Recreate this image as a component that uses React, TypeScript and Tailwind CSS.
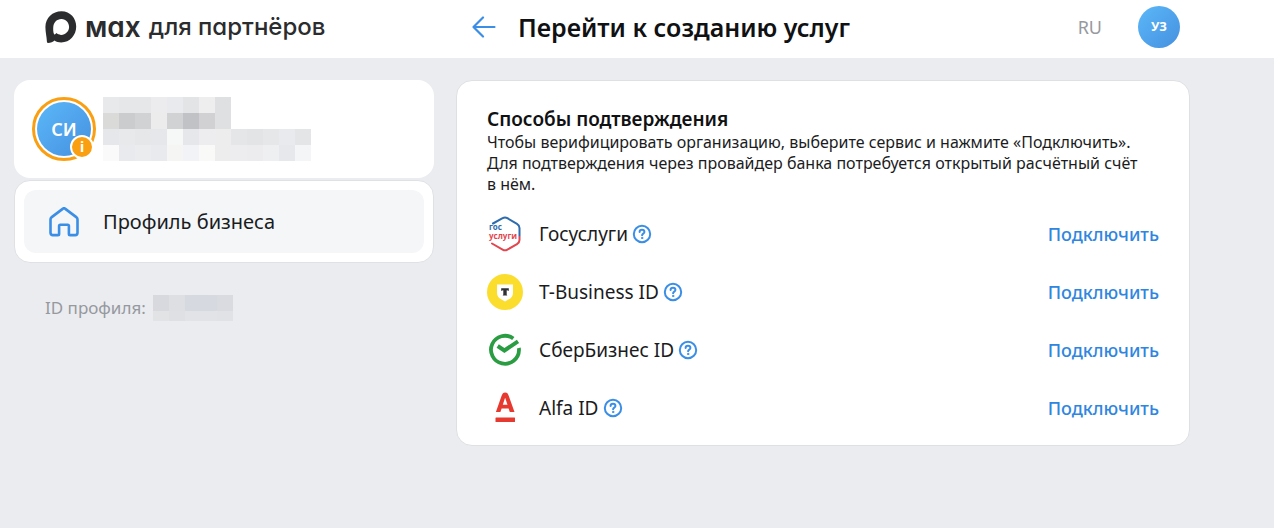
import type { ReactNode } from 'react';

const NAME_BLOCKS = [
    ['bg-[#e8e9eb]', 'bg-[#e6e7e9]', 'bg-[#e6e7e9]', 'bg-[#ececee]', 'bg-[#e8eaed]', 'bg-[#e2e4e6]', 'bg-[#eeeeef]', 'bg-[#dfe0e2]', '', '', '', '', ''],
    ['bg-[#dadad8]', 'bg-[#cbccce]', 'bg-[#d1d2d3]', 'bg-[#ececed]', 'bg-[#d1d2d3]', 'bg-[#c1c2c5]', 'bg-[#d1d1d3]', 'bg-[#dfe0e2]', '', '', '', '', ''],
    ['bg-[#e5e7ea]', 'bg-[#e8e9eb]', 'bg-[#e6e7e8]', 'bg-[#e6e7ea]', 'bg-[#f6f7f7]', 'bg-[#e5e7ea]', 'bg-[#ededef]', 'bg-[#ededee]', 'bg-[#e5e6e8]', 'bg-[#e3e4e6]', 'bg-[#e6e7e9]', 'bg-[#e8eaed]', 'bg-[#e4e5e7]'],
    ['bg-[#f9faf9]', 'bg-[#e9eaed]', 'bg-[#ebecee]', 'bg-[#e9eaed]', 'bg-[#f5f5f4]', 'bg-[#f2f3f6]', 'bg-[#f9f9f8]', 'bg-[#ededee]', 'bg-[#ededef]', 'bg-[#ececee]', 'bg-[#eeeff1]', 'bg-[#e7e8eb]', 'bg-[#f4f5f6]'],
];

const ID_BLOCKS = ['bg-[#d7d9df]', 'bg-[#dddfe3]', 'bg-[#d6d9e0]', 'bg-[#d6d9e0]', 'bg-[#d9dbe1]'];
const ID_BLOCKS_LOW = ['bg-[#e1e3e5]', 'bg-[#dee0e3]', 'bg-[#e2e3e6]', 'bg-[#e2e3e6]', 'bg-[#e1e2e5]'];

const MaxLogo = () => (
    <svg viewBox="0 0 32 32" className="h-8 w-8 shrink-0" aria-hidden="true">
        <path
            fill="#2b2c2e"
            fillRule="evenodd"
            d="M16.5.3C25.3.3 31.200 7.300 31.200 15.600c0 8.700-6.400 15.900-15 15.900-2.900 0-4.600-.5-6.700-1.900C8 31 5.700 31.900 3 31.900c-.8 0-1-.6-1.100-1.400C1.700 25.900.4 21.300.4 16 .4 7 7.600.3 16.500.3Zm.1 7.600C12 7.700 8.700 11.400 8.300 15.700c-.3 3 .1 7.300 1.300 7.700.6.2 1.300-.7 1.800-1.300 1.100.9 2.700 1.700 4.500 1.800 4.400.2 8-3.300 8.200-7.600.2-4.400-3.200-8.200-7.500-8.400Z"
        />
    </svg>
);

const ArrowLeft = () => (
    <svg viewBox="0 0 24 22" className="h-[22px] w-6" fill="none" stroke="#3b8ee5" strokeWidth="2.200" strokeLinecap="round" strokeLinejoin="round" aria-hidden="true">
        <path d="M22.500 11H1.500M11 1.500 1.500 11l9.500 9.500" />
    </svg>
);

const HomeIcon = () => (
    <svg viewBox="0 0 30 30" className="h-[30px] w-[30px] shrink-0" fill="none" stroke="#3b8ee5" strokeWidth="2.600" strokeLinejoin="round" strokeLinecap="round" aria-hidden="true">
        <path d="M1.500 12.400c0-.8.3-1.500.9-2L14 1.600c.6-.5 1.400-.5 2 0l11.600 8.800c.6.5.9 1.200.9 2v13.400c0 1.400-.9 2.300-2.300 2.300h-5.100c-.7 0-1.200-.5-1.200-1.200v-8c0-.7-.5-1.200-1.200-1.200h-7.400c-.7 0-1.200.5-1.200 1.200v8c0 .7-.5 1.200-1.200 1.200H3.800c-1.400 0-2.300-.9-2.300-2.300Z" />
    </svg>
);

const HelpIcon = () => (
    <svg viewBox="0 0 20 20" className="h-5 w-5" fill="none" stroke="#3b8ee5" strokeWidth="2" strokeLinecap="round" aria-hidden="true">
        <circle cx="10" cy="10" r="8.200" />
        <path d="M7.600 8c0-1.300 1-2.200 2.400-2.200s2.400.8 2.400 2.100c0 1.700-2.300 1.700-2.300 3.300" />
        <circle cx="10.100" cy="14" r=".7" fill="#3b8ee5" strokeWidth=".9" />
    </svg>
);

const GosuslugiLogo = () => (
    <svg viewBox="0 0 36 36" className="h-9 w-9" fill="none" strokeWidth="2" strokeLinecap="round" strokeLinejoin="round" aria-label="Госуслуги">
        <path stroke="#2f6cae" d="M6 7.500 15.600 2.200c1.700-1 3.100-1 4.800 0l9.600 5.700c1.700 1 2.500 2.300 2.500 4.100V20" />
        <path stroke="#e2464e" d="M32.500 21v3c0 1.800-.8 3.100-2.500 4.100l-9.600 5.500c-1.700 1-3.100 1-4.800 0L5 27.500" />
        <text fontFamily="Open Sans, sans-serif" fontWeight="700" fontSize="8">
            <tspan x="2" y="14" fill="#2f6cae">гос</tspan>
            <tspan x="2" y="23" fill="#e2464e">услуги</tspan>
        </text>
    </svg>
);

const TBankLogo = () => (
    <svg viewBox="0 0 36 36" className="h-9 w-9" aria-hidden="true">
        <circle cx="18" cy="18" r="18" fill="#fbdd2e" />
        <path fill="#fff" d="M10 10.500h16v8.200c0 3.200-1.700 5.200-4.200 6.600L18 27.400l-3.800-2.100c-2.500-1.400-4.200-3.400-4.200-6.600Z" />
        <path fill="#2f3034" d="M14.200 14.300h7.600v2.700c-.5-.6-1.200-.8-2.100-.8v3.900c0 .8.200 1.200.8 1.400h-5c.6-.2.800-.6.8-1.400v-3.900c-.9 0-1.600.2-2.100.8Z" />
    </svg>
);

const SberLogo = () => (
    <svg viewBox="0 0 36 36" className="h-9 w-9" fill="none" stroke="#2a9d42" aria-hidden="true">
        <path strokeWidth="3.800" d="M26.300 6.500A14 14 0 1 0 32 18c0-.8 0-1.300-.2-2" />
        <path strokeWidth="4" d="m10.700 14 6.700 4.500 13.600-9.200" />
    </svg>
);

const AlfaLogo = () => (
    <svg viewBox="0 0 36 36" className="h-9 w-9" fill="#e63a31" aria-hidden="true">
        <rect x="8.500" y="27.500" width="19.500" height="4.500" rx=".5" />
        <path fillRule="evenodd" d="M21.700 5.800C21 3.700 20.200 2.500 18.200 2.500s-2.800 1.200-3.600 3.300L8.900 22h4.500l1.200-3.600h7l1.200 3.600h4.700Zm-5.900 8.900 2.200-6.700h.2l2.300 6.700Z" />
    </svg>
);

const SERVICES: { name: string; logo: ReactNode }[] = [
    { name: 'Госуслуги', logo: <GosuslugiLogo /> },
    { name: 'T-Business ID', logo: <TBankLogo /> },
    { name: 'СберБизнес ID', logo: <SberLogo /> },
    { name: 'Alfa ID', logo: <AlfaLogo /> },
];

const Header = () => (
    <header className="flex h-[58px] items-center bg-white pr-[94px] pl-[45px] pb-1">
        <a href="#" className="flex w-[427px] shrink-0 items-center gap-2 font-['Inter',sans-serif] text-[#2b2c2e] [font-feature-settings:'cv11']">
            <MaxLogo />
            <span className="text-[28px] leading-8 font-semibold">мах</span>
            <span className="text-[24px] leading-8 font-medium">для партнёров</span>
        </a>
        <button type="button" aria-label="Назад" className="mr-[22px] shrink-0">
            <ArrowLeft />
        </button>
        <h1 className="text-[25px] leading-8 font-semibold text-[#101113]">Перейти к созданию услуг</h1>
        <button type="button" className="mr-9 ml-auto text-[18px] leading-6 text-[#96999e]">RU</button>
        <button type="button" className="flex h-[42px] w-[42px] shrink-0 items-center justify-center rounded-full bg-linear-to-br from-[#5cb8f8] to-[#4590e0] text-[13px] font-bold text-white">
            УЗ
        </button>
    </header>
);

const Sidebar = () => (
    <aside className="w-[420px] shrink-0">
        <div className="flex h-[98px] items-center gap-[7px] rounded-2xl bg-white pl-[18px]">
            <div className="relative flex h-16 w-16 shrink-0 items-center justify-center rounded-full border-[3px] border-[#fa9f12] p-[2px]">
                <div className="flex h-full w-full items-center justify-center rounded-full bg-linear-to-br from-[#5cb8f8] to-[#4590e0] text-[18px] font-semibold text-white">
                    СИ
                </div>
                <span className="absolute right-[-1px] bottom-[-1px] flex h-6 w-6 items-center justify-center rounded-full border-2 border-white bg-[#fa9f12] text-[14px] leading-none font-bold text-white">
                    i
                </span>
            </div>
            <div>
                {NAME_BLOCKS.map((row, i) => (
                    <div key={i} className="flex">
                        {row.map((color, j) => <div key={j} className={`h-4 w-4 ${color}`} />)}
                    </div>
                ))}
            </div>
        </div>

        <nav className="mt-[2px] rounded-2xl border border-[#e0e1e4] bg-white p-[9px]">
            <a href="#" className="flex h-[63px] items-center gap-6 rounded-xl bg-[#f4f6f8] pl-[25px] text-[20px] text-[#1b1c1e]">
                <HomeIcon />
                <span>Профиль бизнеса</span>
            </a>
        </nav>

        <div className="mt-8 flex items-center gap-[7px] pl-[31px] text-[17px] leading-6 text-[#96999e]">
            <span>ID профиля:</span>
            <div>
                <div className="flex">
                    {ID_BLOCKS.map((color, i) => <div key={i} className={`h-4 w-4 ${color}`} />)}
                </div>
                <div className="flex">
                    {ID_BLOCKS_LOW.map((color, i) => <div key={i} className={`h-[10px] w-4 ${color}`} />)}
                </div>
            </div>
        </div>
    </aside>
);

const App = () => {
    return (
        <div className="min-h-screen bg-[#ebecf0] font-['Noto_Sans','Open_Sans',sans-serif]">
            <Header />
            <div className="flex items-start gap-[22px] pt-[22px] pr-[84px] pl-[14px]">
                <Sidebar />
                <main className="min-w-0 flex-1 rounded-2xl border border-[#dfe0e3] bg-white px-[30px] pt-[26px] pb-2">
                    <h2 className="text-[19px] leading-[25px] font-semibold text-[#101113]">Способы подтверждения</h2>
                    <p className="text-[16px] leading-[21px] text-[#1b1c1e]">
                        Чтобы верифицировать организацию, выберите сервис и нажмите «Подключить».
                        <br />
                        Для подтверждения через провайдер банка потребуется открытый расчётный счёт
                        <br />
                        в нём.
                    </p>
                    <ul className="mt-[10px]">
                        {SERVICES.map(({ name, logo }) => (
                            <li key={name} className="flex h-[58px] items-center">
                                {logo}
                                <span className="ml-4 text-[19px] text-[#1b1c1e]">{name}</span>
                                <button type="button" aria-label={`О сервисе ${name}`} className="ml-1">
                                    <HelpIcon />
                                </button>
                                <button type="button" className="ml-auto text-[18px] font-medium text-[#2f86e0]">
                                    Подключить
                                </button>
                            </li>
                        ))}
                    </ul>
                </main>
            </div>
        </div>
    );
};

export default App;
